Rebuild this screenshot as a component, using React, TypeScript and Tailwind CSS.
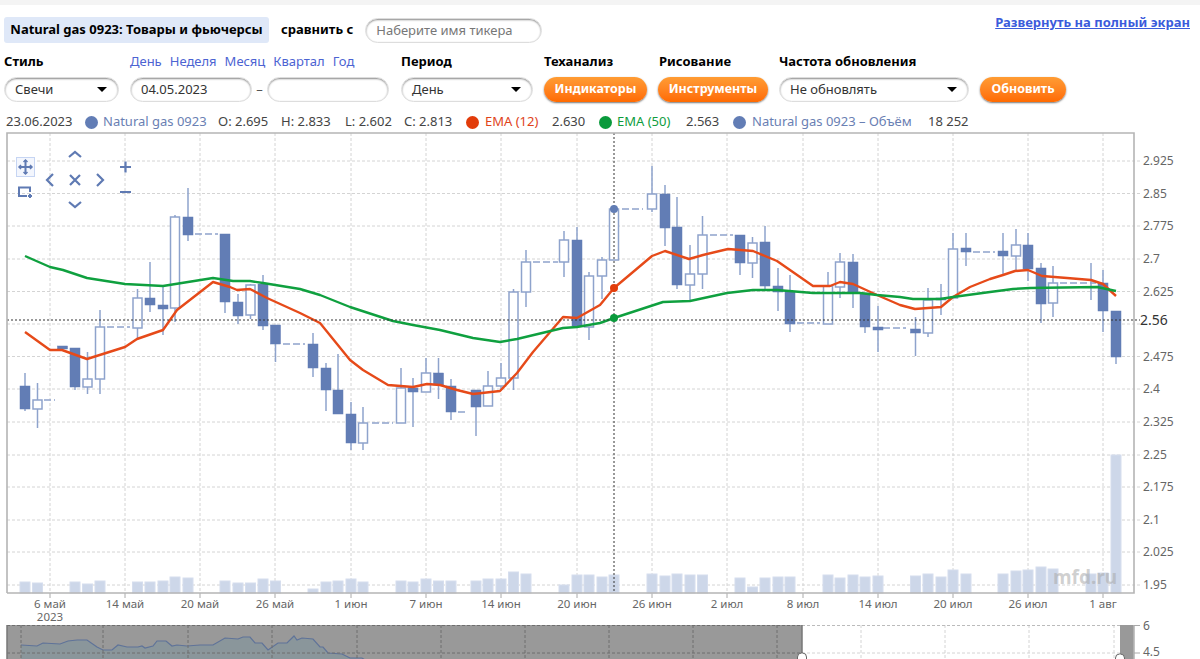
import React from 'react';

// [x, wickTop, wickBottom, bodyTop, bodyBottom, filled]
const candles: [number, number, number, number, number, number][] = [
  [25, 373, 411, 386, 409, 1], [37.5, 383, 428, 400, 409, 0], [62.5, 346, 349, 346, 349, 1], [75, 348, 390, 348, 387, 1],
  [87.5, 352, 394, 379, 387, 0], [100, 310, 394, 327, 379, 0], [137.5, 289, 340, 298, 328, 0], [150, 262, 312, 298, 305, 1],
  [163, 285, 335, 305, 309, 1], [175, 215, 322, 217, 308, 0], [188, 188, 241, 217, 235, 1], [225, 234, 313, 234, 302, 1],
  [238, 294, 324, 302, 316, 1], [250.5, 284, 319, 285, 315, 0], [263, 275, 330, 284, 326, 1], [275.5, 325, 362, 325, 344, 1],
  [313, 333, 377, 344, 368, 1], [326, 363, 411, 368, 390, 1], [338, 354, 414, 390, 414, 1], [351, 402, 450, 414, 443, 1],
  [363, 407, 450, 423, 443, 0], [401, 368, 423, 388, 423, 0], [413, 378, 427, 388, 392, 1], [426, 358, 392, 373, 392, 0],
  [438.5, 358, 399, 373, 385, 1], [451, 379, 420, 386, 412, 1], [476, 390, 436, 390, 407, 1], [488, 371, 406, 386, 406, 0],
  [501, 363, 391, 378, 386, 0], [513.5, 289, 390, 292, 378, 0], [526, 250, 307, 262, 292, 0], [564, 231, 277, 240, 262, 0],
  [577, 227, 326, 240, 326, 1], [589, 272, 340, 276, 327, 0], [602, 257, 299, 260, 276, 0], [614, 209, 260, 209, 260, 0],
  [652, 166, 212, 194, 209, 0], [665, 185, 246, 194, 228, 1], [677, 197, 289, 227, 285, 1], [690, 245, 300, 274, 285, 0],
  [702.5, 216, 289, 235, 274, 0], [740, 235, 275, 235, 263, 1], [752.5, 237, 278, 243, 263, 0], [765, 226, 289, 242, 286, 1],
  [778, 268, 311, 286, 292, 1], [790, 275, 332, 292, 324, 1], [828, 272, 324, 286, 324, 0], [840, 253, 298, 262, 287, 0],
  [853, 254, 308, 262, 293, 1], [865, 293, 333, 293, 327, 1], [878, 306, 352, 327, 330, 1], [915.5, 317, 356, 329, 333, 1],
  [928, 288, 337, 300, 333, 0], [941, 284, 315, 298, 300, 1], [953, 233, 298, 249, 298, 0], [966, 233, 266, 248, 252, 1],
  [1003, 233, 275, 251, 256, 1], [1016, 229, 271, 245, 256, 0], [1028, 233, 281, 245, 269, 1], [1041, 263, 323, 268, 304, 1],
  [1053, 266, 317, 283, 303, 0], [1103, 270, 332, 283, 311, 1], [1116, 311, 364, 311, 357, 1],
];

const gaps = [[44, 55, 400], [107, 130, 327], [195, 218, 234], [283, 305, 344], [372, 393, 423], [458, 468, 412], [533, 558, 262], [622, 643, 209], [710, 733, 235], [797, 820, 323], [883, 906, 328], [973, 995, 252], [1060, 1096, 283]];

const ema12 = '25,332 50,350 62,350 87,359 125,347 137,339 163,330 177,310 213,282 230,287 237,290 250,289 267,298 300,313 320,323 350,360 363,370 388,385 413,387 427,384 440,385 457,390 473,394 500,391 517,373 533,352 563,317 577,318 600,305 614,288 652,256 665,251 689,259 703,255 728,249 753,251 777,261 813,286 830,286 840,282 853,284 877,295 900,305 915,309 941,307 953,297 970,287 990,279 1003,275 1015,271 1028,270 1042,276 1067,278 1091,280 1103,284 1116,296';
const ema50 = '25,256 50,267 63,270 87,278 125,284 163,286 213,278 233,281 250,281 263,283 300,289 320,295 350,307 393,321 413,325 440,330 473,338 500,342 517,339 563,328 577,327 600,323 614,318 663,302 690,301 727,293 753,290 777,290 813,293 833,293 860,293 877,295 900,297 913,299 940,299 953,297 990,292 1013,289 1030,288 1097,287 1116,291';
const navLine = '21,645 37,646 43,643 60,644 68,641 77,640 87,640 97,647 103,650 112,650 118,645 127,647 138,647 142,646 145,648 153,646 157,641 166,641 172,646 177,645 187,646 200,645 213,645 225,638 238,639 243,637 250,637 255,643 262,643 268,650 278,643 287,643 294,636 297,640 302,638 313,639 320,647 323,647 328,653 342,654 350,658 362,658 368,662';

// [x, top]
const volumes = [[25, 582], [37.5, 583], [75, 582], [87.5, 584], [100, 581], [137.5, 582], [150, 582], [163, 581], [175, 577], [188, 578], [225, 581], [238, 583], [250.5, 583], [263, 579], [275.5, 581], [313, 589], [326, 582], [338, 581], [351, 579], [363, 582], [401, 581], [413, 582], [426, 579], [438.5, 581], [451, 581], [476, 581], [488, 579], [501, 579], [513.5, 572], [526, 574], [564, 585], [577, 575], [589, 575], [602, 577], [614, 575], [652, 574], [665, 576], [677, 574], [690, 575], [702.5, 575], [740, 578], [752.5, 587], [765, 578], [778, 577], [790, 577], [828, 575], [840, 578], [853, 575], [865, 577], [878, 576], [915.5, 576], [928, 574], [941, 577], [953, 570], [966, 574], [1003, 574], [1016, 571], [1028, 570], [1041, 567], [1053, 569], [1091, 574], [1103, 573], [1116, 455]];

const yTicks: [number, string][] = [[161, '2.925'], [193.5, '2.85'], [226, '2.775'], [259, '2.7'], [291.5, '2.625'], [324, ''], [356.5, '2.475'], [389, '2.4'], [422, '2.325'], [455, '2.25'], [487, '2.175'], [520, '2.1'], [552, '2.025'], [585, '1.95']];
const xTicks: [number, string][] = [[50, '6 май'], [125, '14 май'], [200, '20 май'], [275, '26 май'], [351, '1 июн'], [426, '7 июн'], [501, '14 июн'], [577, '20 июн'], [652, '26 июн'], [727, '2 июл'], [803, '8 июл'], [878, '14 июл'], [953, '20 июл'], [1028, '26 июл'], [1103, '1 авг']];
const navGrid = [21, 103, 188, 272, 357, 441, 525, 609, 693, 777, 861, 945, 1029, 1114];

const BLUE = '#627db5';
const LIGHT = '#8ea3cc';
const font = '"Noto Sans", sans-serif';

function Chart() {
  return (
    <svg viewBox="0 130 1200 529" className="block w-[1200px] h-[529px]" fontFamily={font}>
      {yTicks.map(([y, label]) => (
        <g key={y}>
          <line x1="7" x2="1140" y1={y} y2={y} stroke="#d4d4d4" strokeWidth="1" strokeDasharray="3 2" />
          <text x="1143" y={y + 4} fontSize="12" fill="#666">{label}</text>
        </g>
      ))}
      {xTicks.map(([x, label]) => (
        <g key={x}>
          <line x1={x} x2={x} y1="133" y2="593" stroke="#d4d4d4" strokeWidth="1" strokeDasharray="3 2" />
          <line x1={x} x2={x} y1="593" y2="598" stroke="#aaa" />
          <text x={x} y="608" fontSize="11.5" fill="#666" textAnchor="middle">{label}</text>
        </g>
      ))}
      <text x="50" y="621" fontSize="11.5" fill="#666" textAnchor="middle">2023</text>

      {volumes.map(([x, top]) => (
        <rect key={x} x={x - 5} y={top} width="10" height={593 - top} fill="#cdd7e9" stroke="#d6deee" strokeWidth="1" />
      ))}
      <text x="1053" y="584" fontSize="19" fontWeight="700" fill="#a8a8a8" fillOpacity="0.55">mfd.ru</text>

      {gaps.map(([a, b, y]) => (
        <line key={a} x1={a} x2={b} y1={y} y2={y} stroke={LIGHT} strokeWidth="1.5" strokeDasharray="7 3" />
      ))}
      <line x1="1091" x2="1091" y1="263" y2="300" stroke={LIGHT} strokeWidth="1.5" />
      {candles.map(([x, wt, wb, bt, bb, filled]) => (
        <g key={x}>
          <line x1={x} x2={x} y1={wt} y2={wb} stroke={LIGHT} strokeWidth="1.5" />
          {filled
            ? <rect x={x - 5} y={bt} width="10" height={bb - bt} fill={BLUE} stroke={BLUE} strokeWidth="0.5" />
            : <rect x={x - 4.5} y={bt} width="9" height={bb - bt} fill="#fff" stroke={LIGHT} strokeWidth="1.5" />}
        </g>
      ))}

      <polyline points={ema12} fill="none" stroke="#e64a19" strokeWidth="2.4" strokeLinejoin="round" />
      <polyline points={ema50} fill="none" stroke="#0fa03f" strokeWidth="2.4" strokeLinejoin="round" />

      <line x1="614" x2="614" y1="133" y2="593" stroke="#333" strokeWidth="1" strokeDasharray="2 2" />
      <line x1="7" x2="1140" y1="320" y2="320" stroke="#333" strokeWidth="1" strokeDasharray="2 2" />
      <text x="1140" y="325" fontSize="14" fill="#333">2.56</text>
      <circle cx="614" cy="209" r="4" fill={BLUE} />
      <circle cx="614" cy="288" r="4" fill="#e23c0a" />
      <circle cx="614" cy="318" r="4" fill="#0a9a3c" />

      <path d="M7 593V133H1134V593H7" fill="none" stroke="#b5b5b5" strokeWidth="1.6" />

      {/* pan and zoom controls */}
      <rect x="16.5" y="157.5" width="18" height="19" fill="#f3f6fd" stroke="#c6d5f3" />
      <g fill="none" stroke="#5f7ab3" strokeWidth="2">
        <path d="M25.5 160v14M19 167h13" />
        <path d="M23.5 162l2-2 2 2M23.5 172l2 2 2-2M21 165l-2 2 2 2M30 165l2 2-2 2" strokeWidth="1.5" />
        <path d="M30 192v-4.500h-11v8.500h8M28 196h4M30 194v4" />
        <path d="M69 157l6-5 6 5M53 174l-6 6 6 6M97 174l6 6-6 6M69 202l6 5 6-5M70 175l10 10M80 175l-10 10" strokeWidth="2.200" />
        <path d="M120 167h11M125.500 161.500v11M120 192h11" strokeWidth="2.200" />
      </g>

      {/* navigator */}
      <rect x="7" y="625" width="795" height="34" fill="#999" />
      <rect x="1120" y="625" width="14" height="34" fill="#999" />
      <polygon points={`${navLine} 368,659 21,659`} fill="#8a969b" />
      <polyline points={navLine} fill="none" stroke="#5f7399" strokeWidth="1.200" />
      {navGrid.map((x) => (
        <line key={x} x1={x} x2={x} y1="625" y2="659" stroke={x > 802 && x < 1120 ? '#d4d4d4' : '#6f6f6f'} strokeDasharray="3 2" />
      ))}
      <line x1="7" x2="802" y1="653" y2="653" stroke="#6f6f6f" strokeDasharray="3 2" />
      <line x1="802" x2="1120" y1="653" y2="653" stroke="#d4d4d4" strokeDasharray="3 2" />
      <line x1="7" x2="802" y1="625.500" y2="625.500" stroke="#6f6f6f" strokeDasharray="3 2" />
      <line x1="802" x2="1120" y1="625.500" y2="625.500" stroke="#bbb" strokeDasharray="3 2" />
      <line x1="7" x2="7" y1="625" y2="659" stroke="#777" strokeWidth="1.500" />
      <line x1="802" x2="802" y1="625" y2="659" stroke="#777" strokeWidth="1.500" />
      <line x1="1134" x2="1134" y1="625" y2="659" stroke="#b5b5b5" strokeWidth="1.600" />
      <rect x="797.500" y="653" width="9" height="14" rx="4" fill="#fff" stroke="#666" />
      <rect x="1115.500" y="654" width="9" height="14" rx="4" fill="#fff" stroke="#666" />
      <line x1="1134" x2="1140" y1="625.500" y2="625.500" stroke="#aaa" />
      <line x1="1134" x2="1140" y1="653" y2="653" stroke="#aaa" />
      <text x="1143" y="630" fontSize="12" fill="#666">6</text>
      <text x="1143" y="656" fontSize="12" fill="#666">4.5</text>
    </svg>
  );
}

function Field({ className, children }: { className: string; children?: React.ReactNode }) {
  return (
    <div className={`flex h-[25px] items-center justify-between rounded-full border border-[#ddd] bg-white px-[10px] text-[13px] text-[#333] shadow-[inset_0_1px_2px_#888] ${className}`}>
      {children}
    </div>
  );
}

const Caret = () => <span className="mr-[1px] h-0 w-0 border-x-[5px] border-t-[5px] border-x-transparent border-t-black" />;

function OrangeButton({ className, children }: { className: string; children: React.ReactNode }) {
  return (
    <button className={`h-[25px] rounded-full bg-gradient-to-b from-[#ff9c33] to-[#ff6a00] text-[12.5px] font-bold text-white shadow-[0_1px_2px_#777] ${className}`}>
      {children}
    </button>
  );
}

function Dot({ color }: { color: string }) {
  return <span className={`h-[13px] w-[13px] rounded-full ${color}`} />;
}

export default function App() {
  return (
    <div className="w-[1200px] h-[659px] overflow-hidden bg-white text-black font-['Noto_Sans',sans-serif]">
      <div className="h-[5px] bg-[#f4f4f4]" />

      <div className="flex h-[26px] items-center mt-[12px] pl-[4px] pr-[10px]">
        <div className="flex h-[26px] w-[265px] items-center justify-center rounded-[3px] bg-[#dfe8f8] text-[13px] font-bold whitespace-nowrap">
          Natural gas 0923: Товары и фьючерсы
        </div>
        <span className="ml-[12px] text-[13px] font-bold">сравнить с</span>
        <input
          placeholder="Наберите имя тикера"
          className="ml-[12px] h-[25px] w-[177px] rounded-full border border-[#ddd] px-[10px] text-[13px] shadow-[inset_0_1px_2px_#888] outline-none placeholder:text-[#777]"
        />
        <a className="ml-auto -mt-[15px] text-[13px] font-bold text-[#3b5bdb] underline">Развернуть на полный экран</a>
      </div>

      <div className="flex h-[20px] items-center mt-[9px] text-[13px] font-bold">
        <span className="ml-[4px] w-[126px]">Стиль</span>
        <div className="flex w-[271px] gap-[8px] font-normal text-[#4c63d2]">
          <span>День</span>
          <span>Неделя</span>
          <span>Месяц</span>
          <span>Квартал</span>
          <span>Год</span>
        </div>
        <span className="w-[143px]">Период</span>
        <span className="w-[115px]">Теханализ</span>
        <span className="w-[120px]">Рисование</span>
        <span>Частота обновления</span>
      </div>

      <div className="flex items-center mt-[5px] pl-[4px]">
        <Field className="w-[115px]">
          Свечи
          <Caret />
        </Field>
        <Field className="ml-[11px] w-[122px]">04.05.2023</Field>
        <span className="w-[15px] text-center text-[13px] text-[#555]">–</span>
        <Field className="w-[122px]" />
        <Field className="ml-[12px] w-[132px]">
          День
          <Caret />
        </Field>
        <OrangeButton className="ml-[11px] w-[103px]">Индикаторы</OrangeButton>
        <OrangeButton className="ml-[11px] w-[110px]">Инструменты</OrangeButton>
        <Field className="ml-[11px] w-[190px]">
          Не обновлять
          <Caret />
        </Field>
        <OrangeButton className="ml-[11px] w-[86px]">Обновить</OrangeButton>
      </div>

      <div className="flex h-[16px] items-center mt-[12px] pl-[6px] text-[13px] text-[#444] whitespace-nowrap">
        <span className="w-[79px]">23.06.2023</span>
        <Dot color="bg-[#627db5]" />
        <span className="ml-[5px] w-[115px] text-[#6a80b3]">Natural gas 0923</span>
        <span className="w-[63px]">O: 2.695</span>
        <span className="w-[64px]">H: 2.833</span>
        <span className="w-[59px]">L: 2.602</span>
        <span className="w-[62px]">C: 2.813</span>
        <Dot color="bg-[#e23c0a]" />
        <span className="ml-[6px] w-[67px] text-[#e0431a]">EMA (12)</span>
        <span className="w-[47px]">2.630</span>
        <Dot color="bg-[#0a9a3c]" />
        <span className="ml-[5px] w-[69px] text-[#0f9d3e]">EMA (50)</span>
        <span className="w-[47px]">2.563</span>
        <Dot color="bg-[#627db5]" />
        <span className="ml-[6px] w-[176px] text-[#6a80b3]">Natural gas 0923 – Объём</span>
        <span>18 252</span>
      </div>

      <Chart />
    </div>
  );
}
